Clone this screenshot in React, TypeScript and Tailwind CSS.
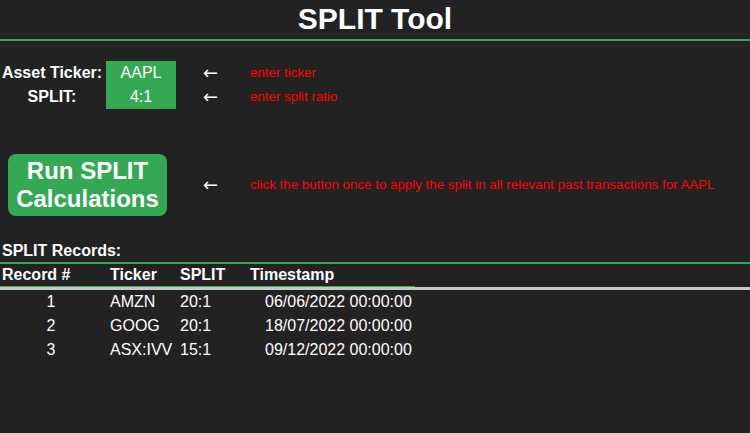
const records = [
  { id: 1, ticker: "AMZN", split: "20:1", ts: "06/06/2022 00:00:00" },
  { id: 2, ticker: "GOOG", split: "20:1", ts: "18/07/2022 00:00:00" },
  { id: 3, ticker: "ASX:IVV", split: "15:1", ts: "09/12/2022 00:00:00" },
]

function Hint({ children }: { children: React.ReactNode }) {
  return (
    <>
      <div className="w-[50px] pl-[3px] font-['DejaVu_Sans',sans-serif] text-[18px] leading-none text-white">←</div>
      <div className="text-[13.33px] text-[#ff0000]">{children}</div>
    </>
  )
}

export default function App() {
  return (
    <div
      className="min-h-[433px] w-full bg-[#222222] text-white"
      style={{ fontFamily: '"Liberation Sans", Arial, sans-serif' }}
    >
      <div className="flex h-[41px] items-center justify-center border-b-2 border-[#34a853] pb-[2px]">
        <h1 className="text-[30px] font-bold leading-none">SPLIT Tool</h1>
      </div>

      <div className="mt-[20px] flex flex-col">
        <div className="flex h-[24px] items-center">
          <div className="w-[104px] text-center text-[16px] font-bold">Asset Ticker:</div>
          <div className="ml-[2px] flex h-[24px] w-[70px] items-center justify-center bg-[#34a853] text-[16px]">AAPL</div>
          <div className="w-[24px]" />
          <Hint>enter ticker</Hint>
        </div>
        <div className="flex h-[24px] items-center">
          <div className="w-[104px] text-center text-[16px] font-bold">SPLIT:</div>
          <div className="ml-[2px] flex h-[24px] w-[70px] items-center justify-center bg-[#34a853] text-[16px]">4:1</div>
          <div className="w-[24px]" />
          <Hint>enter split ratio</Hint>
        </div>
      </div>

      <div className="mt-[45px] flex items-center">
        <div className="w-[200px] pl-[8px]">
          <button className="h-[62px] w-[159px] rounded-[8px] bg-[#34a853] text-[24px] font-bold leading-[28px] text-white">
            Run SPLIT
            <br />
            Calculations
          </button>
        </div>
        <Hint>click the button once to apply the split in all relevant past transactions for AAPL</Hint>
      </div>

      <div className="mt-[24px] h-[22px] pl-[2px] text-[16px] font-bold leading-[22px]">SPLIT Records:</div>
      <div className="h-[2px] bg-[#34a853]" />

      <div className="border-b-[3px] border-[#c8c8c8]">
        <div className="grid w-[415px] grid-cols-[110px_70px_70px_165px] border-b border-[#34a853] text-[16px] font-bold leading-[22px]">
          <div className="pl-[2px]">Record #</div>
          <div>Ticker</div>
          <div>SPLIT</div>
          <div>Timestamp</div>
        </div>
      </div>

      <div className="flex flex-col text-[16px]">
        {records.map((r) => (
          <div key={r.id} className="grid h-[24px] w-[415px] grid-cols-[110px_70px_70px_165px] items-center">
            <div className="w-[102px] text-center">{r.id}</div>
            <div>{r.ticker}</div>
            <div>{r.split}</div>
            <div className="pl-[15px]">{r.ts}</div>
          </div>
        ))}
      </div>
    </div>
  )
}
